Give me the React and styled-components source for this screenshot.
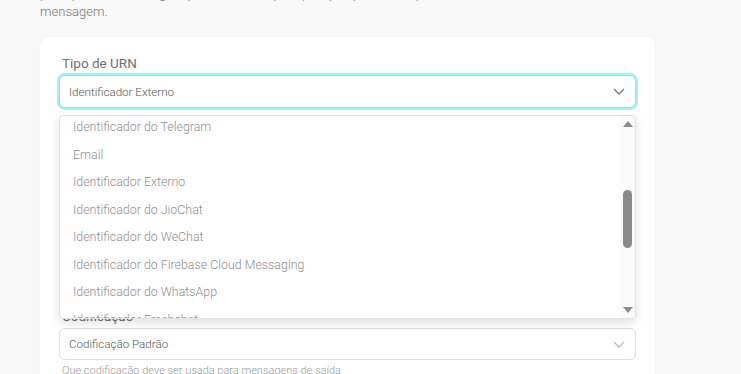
import React from "react";
import styled, { createGlobalStyle } from "styled-components";

const urnTypes = [
  "Identificador do Telegram",
  "Email",
  "Identificador Externo",
  "Identificador do JioChat",
  "Identificador do WeChat",
  "Identificador do Firebase Cloud Messaging",
  "Identificador do WhatsApp",
  "Identificador Freshchat",
  "Identificador do Viber",
];

function Chevron({ light }) {
  return (
    <svg width="12" height="7" viewBox="0 0 12 7">
      <path
        d="M1 1l5 5 5-5"
        fill="none"
        stroke={light ? "#bdbdbd" : "#777"}
        strokeWidth="1.3"
      />
    </svg>
  );
}

function Arrow({ down }) {
  return (
    <svg width="10" height="6" viewBox="0 0 10 6">
      <path d={down ? "M0 0h10L5 6z" : "M0 6h10L5 0z"} fill="#8c8c8c" />
    </svg>
  );
}

export default function App() {
  return (
    <>
      <GlobalStyle />
      <Page>
        <Intro>
          pelo qual o contato agora pode ser alcançado por qualquer canal quando
          for enviar uma
          <br />
          mensagem.
        </Intro>
        <Card>
          <Field>
            <Label>Tipo de URN</Label>
            <SelectWrap>
              <Select focused>
                <SelectText>Identificador Externo</SelectText>
                <Chevron />
              </Select>
              <Dropdown>
                <List>
                  {urnTypes.map((t) => (
                    <Item key={t}>{t}</Item>
                  ))}
                </List>
                <Track>
                  <Arrow />
                  <ThumbArea>
                    <Thumb />
                  </ThumbArea>
                  <Arrow down />
                </Track>
              </Dropdown>
            </SelectWrap>
          </Field>
          <Field>
            <Label>Valor</Label>
            <Select />
            <Help>O identificador que deve ser adicionado ao contato</Help>
          </Field>
          <Field>
            <Label>Canal</Label>
            <Select />
            <Help>Canal preferido para este contato</Help>
          </Field>
          <Field>
            <Label>Codificação</Label>
            <Select small>
              <SelectText>Codificação Padrão</SelectText>
              <Chevron light />
            </Select>
            <Help>Que codificação deve ser usada para mensagens de saída</Help>
          </Field>
        </Card>
      </Page>
    </>
  );
}

const GlobalStyle = createGlobalStyle`
  body {
    margin: 0;
    background: #f8f8f8;
    font-family: Roboto, "Liberation Sans", sans-serif;
  }
`;

const Page = styled.div`
  width: 741px;
  height: 374px;
  overflow: hidden;
  padding: 0 86px 0 40px;
  box-sizing: border-box;
`;

const Intro = styled.p`
  margin: -15px 0 0;
  font-size: 13px;
  line-height: 18px;
  font-weight: 300;
  color: #777;
  white-space: nowrap;
`;

const Card = styled.div`
  margin-top: 16px;
  background: #fff;
  border-radius: 8px;
  box-shadow: 0 0 2px rgba(0, 0, 0, 0.06);
  padding: 18px 19px 20px;
  display: flex;
  flex-direction: column;
  gap: 20px;
`;

const Field = styled.div`
  display: flex;
  flex-direction: column;
`;

const Label = styled.div`
  font-size: 13.5px;
  line-height: 16px;
  font-weight: 400;
  color: #707070;
  padding-left: 3px;
  margin-bottom: 4px;
`;

const SelectWrap = styled.div`
  position: relative;
`;

const Select = styled.div`
  height: ${(p) => (p.small ? 32 : 33)}px;
  box-sizing: border-box;
  display: flex;
  align-items: center;
  justify-content: space-between;
  padding: 0 10px 0 9px;
  border-radius: 6px;
  background: #fff;
  border: 1px solid ${(p) => (p.focused ? "#8fe4e9" : "#dedede")};
  box-shadow: ${(p) => (p.focused ? "0 0 0 2px #a9eef2" : "none")};
`;

const SelectText = styled.span`
  font-size: 11.6px;
  font-weight: 300;
  color: #555;
`;

const Dropdown = styled.div`
  position: absolute;
  top: calc(100% + 7px);
  left: 0;
  right: 0;
  height: 204px;
  box-sizing: border-box;
  background: #fff;
  border: 1px solid #e2e2e2;
  border-radius: 4px;
  box-shadow: 0 4px 10px rgba(0, 0, 0, 0.12);
  display: flex;
  overflow: hidden;
  z-index: 2;
`;

const List = styled.div`
  flex: 1;
  margin-top: -2.75px;
  padding-left: 1px;
`;

const Item = styled.div`
  height: 27.5px;
  line-height: 27.5px;
  padding-left: 12px;
  font-size: 12.4px;
  font-weight: 300;
  color: #8f8f8f;
  white-space: nowrap;
`;

const Track = styled.div`
  width: 15px;
  background: #fafafa;
  display: flex;
  flex-direction: column;
  align-items: center;
  padding: 5px 0;
  box-sizing: border-box;
`;

const ThumbArea = styled.div`
  flex: 1;
  width: 100%;
  display: flex;
  justify-content: center;
  padding-top: 63px;
`;

const Thumb = styled.div`
  width: 9px;
  height: 58px;
  border-radius: 5px;
  background: #8a8a8a;
`;

const Help = styled.div`
  margin-top: 4px;
  padding-left: 3px;
  font-size: 11px;
  line-height: 13px;
  font-weight: 300;
  color: #999;
`;
